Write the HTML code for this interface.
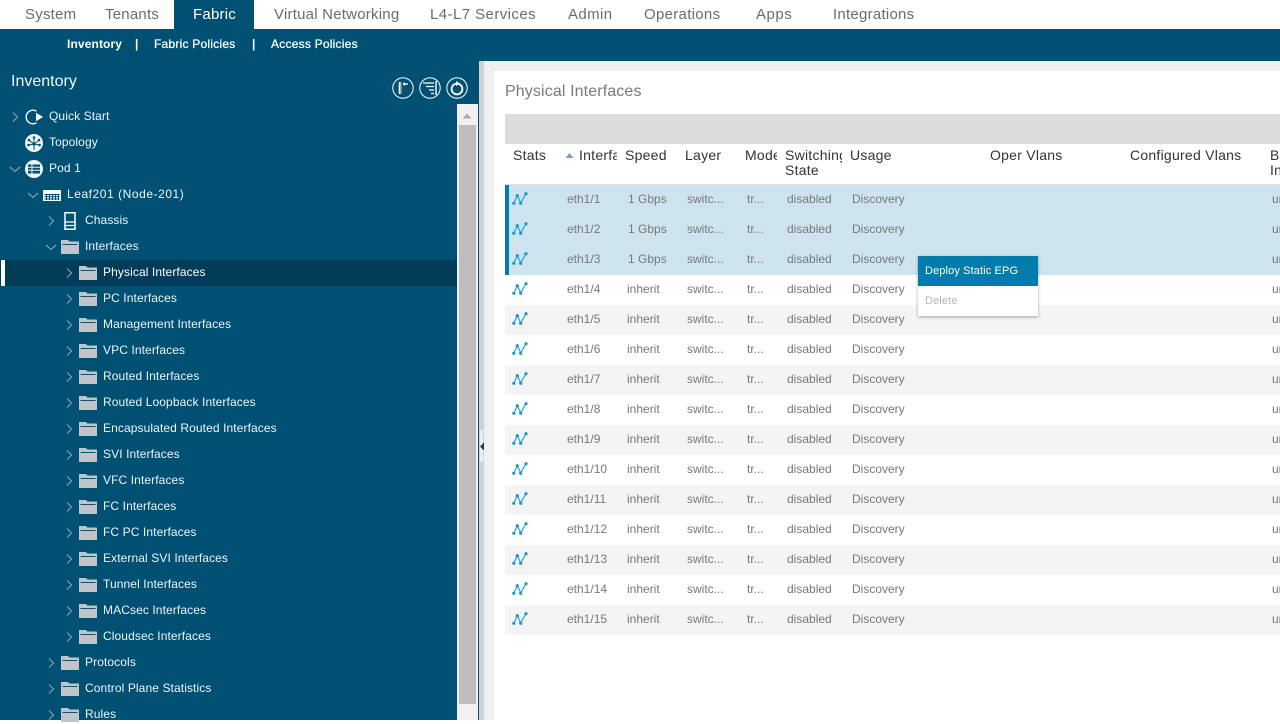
<!DOCTYPE html>
<html><head><meta charset="utf-8"><title>Fabric Inventory</title>
<style>
html,body{margin:0;padding:0}
body{width:1280px;height:720px;overflow:hidden;position:relative;background:#fff;font-family:"Liberation Sans",sans-serif;font-size:12px}
div,span,svg{position:absolute;white-space:nowrap}
.nav{top:6px;font-size:15px;line-height:18px;color:#6b6b6b;letter-spacing:.22px}
.sub{top:37px;font-size:12px;line-height:14px;color:#fff;font-weight:bold;letter-spacing:.12px}
.tx{color:#eef5f8;line-height:14px;letter-spacing:.1px;margin-top:-1px}
.ch{width:12px;height:12px;fill:none;stroke:#7fa0b2;stroke-width:1.2}
.ic{width:18px;height:18px}
.h{top:148px;font-size:14px;line-height:15px;color:#333;overflow:hidden;letter-spacing:.25px}
.row{left:505px;width:775px;height:30px;background:#fff}
.g{background:#f4f4f4}
.s{background:#cde4ef}
.s:before{content:"";position:absolute;left:0;top:0;width:4px;height:30px;background:#017cad}
.row span{top:7px;line-height:14px;color:#787878}
.row svg{left:7px;top:5px;width:16px;height:16px}
</style></head><body>
<svg width="0" height="0" style="left:0;top:0">
<defs>
<symbol id="f" viewBox="0 0 18 18"><path d="M0 2h7l1.500 1.500H18V16H0z" fill="#bfc5cb"/><path d="M1.500 6h15v1.300h-15z" fill="#17506f"/><path d="M1.500 7.300h15V8h-15z" fill="#e6e8ea"/></symbol>
<symbol id="r" viewBox="0 0 12 12"><path d="M4 1.500 8.500 6 4 10.500"/></symbol>
<symbol id="d" viewBox="0 0 12 12"><path d="M1 4 6 8.500 11 4"/></symbol>
<symbol id="c" viewBox="0 0 16 16"><path d="M2 13 5.300 5.500 8.700 13 14 3.500" fill="none" stroke="#189ed8" stroke-width="1.100"/><circle cx="1.800" cy="13.300" r="1.600" fill="#0f9ad6"/><circle cx="5.300" cy="5.700" r="1.600" fill="#0f9ad6"/><circle cx="8.700" cy="13.300" r="1.600" fill="#0f9ad6"/><circle cx="14" cy="3.700" r="1.600" fill="#0f9ad6"/></symbol>
</defs></svg>

<div style="left:0;top:0;width:1280px;height:29px;background:#fff"></div>
<div style="left:174px;top:0;width:80px;height:29px;background:#005073"></div>
<div class="nav" style="left:25px">System</div>
<div class="nav" style="left:105px">Tenants</div>
<div class="nav" style="left:193px;color:#fff">Fabric</div>
<div class="nav" style="left:274px">Virtual Networking</div>
<div class="nav" style="left:430px;letter-spacing:.43px">L4-L7 Services</div>
<div class="nav" style="left:568px;letter-spacing:.4px">Admin</div>
<div class="nav" style="left:644px;letter-spacing:.3px">Operations</div>
<div class="nav" style="left:756px;letter-spacing:.5px">Apps</div>
<div class="nav" style="left:833px;letter-spacing:.25px">Integrations</div>

<div style="left:0;top:29px;width:1280px;height:32px;background:#005073"></div>
<div class="sub" style="left:67px">Inventory</div>
<div class="sub" style="left:135px">|</div>
<div class="sub" style="left:154px;font-weight:normal;letter-spacing:.23px;-webkit-text-stroke:.25px #fff">Fabric Policies</div>
<div class="sub" style="left:252px">|</div>
<div class="sub" style="left:271px;font-weight:normal;letter-spacing:.23px;-webkit-text-stroke:.25px #fff">Access Policies</div>

<div style="left:0;top:61px;width:457px;height:659px;background:#005073"></div>
<div style="left:457px;top:61px;width:21px;height:43px;background:#005073"></div>
<div style="left:457px;top:104px;width:21px;height:616px;background:#f0f0f0"></div>
<div style="left:459px;top:125px;width:17px;height:579px;background:#bdbdbd"></div>
<svg style="left:462px;top:112px;width:10px;height:8px"><path d="M5 1.500 9.500 6.500H.5z" fill="#a9a9a9"/></svg>
<div style="left:478px;top:61px;width:1px;height:659px;background:#005073"></div>
<div style="left:479px;top:61px;width:5px;height:659px;background:#d2d2d2"></div>
<div style="left:484px;top:61px;width:796px;height:659px;background:#f0f0f0"></div>
<div style="left:494px;top:71px;width:786px;height:649px;background:#fff"></div>
<div style="left:480px;top:430px;width:3px;height:32px;background:#ececec"></div>
<svg style="left:479px;top:442px;width:6px;height:9px"><path d="M1 4.500 5 .5v8z" fill="#333"/></svg>

<div style="left:11px;top:72px;font-size:16px;line-height:19px;color:#f2f7f9">Inventory</div>
<svg style="left:392px;top:77px;width:22px;height:22px" viewBox="0 0 22 22" fill="none"><circle cx="11" cy="11" r="10.200" stroke="#e8f0f4" stroke-width="1.100"/><path d="M7.500 5v12" stroke="#fff" stroke-width="1.600"/><path d="M9 5v12" stroke="#e9c98a" stroke-width=".8"/><path d="M11 7h5" stroke="#fff" stroke-width="1.300"/><path d="M13 5l-2.500 2 2.500 2z" fill="#fff"/></svg>
<svg style="left:419px;top:77px;width:22px;height:22px" viewBox="0 0 22 22" fill="none"><circle cx="11" cy="11" r="10.200" stroke="#e8f0f4" stroke-width="1.100"/><path d="M4 6h11M7 9.500h8M10 13h5M12 16.500h3" stroke="#fff" stroke-width="1.300"/><path d="M17 4v14" stroke="#fff" stroke-width="1.400"/></svg>
<svg style="left:446px;top:77px;width:22px;height:22px" viewBox="0 0 22 22" fill="none"><circle cx="11" cy="11" r="10.200" stroke="#e8f0f4" stroke-width="1.100"/><circle cx="11" cy="12" r="5.400" stroke="#fff" stroke-width="1.800"/><path d="M10 4l4 2.500-4 2.500z" fill="#fff"/></svg>

<!-- tree -->
<div style="left:0;top:260px;width:457px;height:26px;background:#023c59"></div>
<div style="left:1px;top:260px;width:4px;height:26px;background:#fff"></div>

<svg class="ch" style="left:9px;top:111px"><use href="#r"/></svg>
<svg style="left:25px;top:108px;width:19px;height:18px" viewBox="0 0 19 18" fill="none"><path d="M11.500 3.200A6.800 6.800 0 1 0 11.500 14.800" stroke="#fff" stroke-width="1.300"/><path d="M11 4.800 18 9l-7 4.200z" fill="#fff"/></svg>
<div class="tx" style="left:49px;top:110px">Quick Start</div>

<svg style="left:25px;top:134px;width:18px;height:18px" viewBox="0 0 18 18"><circle cx="9" cy="9" r="9" fill="#f2f5f7"/><path d="M9 4v12M4 6.500 9 10l5-3.500M3.500 11 9 10l5.500 1" stroke="#005073" stroke-width="1" fill="none"/><circle cx="9" cy="3.500" r="1.300" fill="#005073"/><circle cx="4" cy="6" r="1.300" fill="#005073"/><circle cx="14" cy="6" r="1.300" fill="#005073"/><circle cx="3.500" cy="11" r="1.300" fill="#005073"/><circle cx="14.500" cy="11" r="1.300" fill="#005073"/><circle cx="9" cy="10" r="1.600" fill="#005073"/></svg>
<div class="tx" style="left:49px;top:136px">Topology</div>

<svg class="ch" style="left:9px;top:163px"><use href="#d"/></svg>
<svg style="left:25px;top:160px;width:18px;height:18px" viewBox="0 0 18 18"><circle cx="9" cy="9" r="9" fill="#f2f5f7"/><path d="M3 4.500h12v9H3z" fill="#005073"/><path d="M3 7.200h12M3 10.200h12M7 4.500v9" stroke="#f2f5f7" stroke-width="1"/></svg>
<div class="tx" style="left:49px;top:162px">Pod 1</div>

<svg class="ch" style="left:27px;top:189px"><use href="#d"/></svg>
<svg style="left:43px;top:189px;width:18px;height:13px" viewBox="0 0 18 13"><path d="M0 1h18v11H0z" fill="#fff"/><path d="M1.500 5.500h15M1.500 7.800h15M1.500 10h15" stroke="#005073" stroke-width="1"/><path d="M3.500 5v6M6.500 5v6M9.500 5v6M12.500 5v6M15.500 5v6" stroke="#005073" stroke-width="1"/></svg>
<div class="tx" style="left:67px;top:188px;letter-spacing:.55px">Leaf201 (Node-201)</div>

<svg class="ch" style="left:45px;top:215px"><use href="#r"/></svg>
<svg style="left:64px;top:212px;width:12px;height:18px" viewBox="0 0 12 18" fill="none"><path d="M1 .8h10v16.400H1z" stroke="#fff" stroke-width="1.500"/><path d="M1 10h10M1 13.500h10" stroke="#fff" stroke-width="1.300"/></svg>
<div class="tx" style="left:85px;top:214px">Chassis</div>

<svg class="ch" style="left:45px;top:241px"><use href="#d"/></svg>
<svg class="ic" style="left:61px;top:238px"><use href="#f"/></svg>
<div class="tx" style="left:85px;top:240px">Interfaces</div>

<svg class="ch" style="left:63px;top:267px"><use href="#r"/></svg><svg class="ic" style="left:79px;top:264px"><use href="#f"/></svg><div class="tx" style="left:103px;top:266px;color:#fff">Physical Interfaces</div>
<svg class="ch" style="left:63px;top:293px"><use href="#r"/></svg><svg class="ic" style="left:79px;top:290px"><use href="#f"/></svg><div class="tx" style="left:103px;top:292px">PC Interfaces</div>
<svg class="ch" style="left:63px;top:319px"><use href="#r"/></svg><svg class="ic" style="left:79px;top:316px"><use href="#f"/></svg><div class="tx" style="left:103px;top:318px">Management Interfaces</div>
<svg class="ch" style="left:63px;top:345px"><use href="#r"/></svg><svg class="ic" style="left:79px;top:342px"><use href="#f"/></svg><div class="tx" style="left:103px;top:344px">VPC Interfaces</div>
<svg class="ch" style="left:63px;top:371px"><use href="#r"/></svg><svg class="ic" style="left:79px;top:368px"><use href="#f"/></svg><div class="tx" style="left:103px;top:370px">Routed Interfaces</div>
<svg class="ch" style="left:63px;top:397px"><use href="#r"/></svg><svg class="ic" style="left:79px;top:394px"><use href="#f"/></svg><div class="tx" style="left:103px;top:396px">Routed Loopback Interfaces</div>
<svg class="ch" style="left:63px;top:423px"><use href="#r"/></svg><svg class="ic" style="left:79px;top:420px"><use href="#f"/></svg><div class="tx" style="left:103px;top:422px">Encapsulated Routed Interfaces</div>
<svg class="ch" style="left:63px;top:449px"><use href="#r"/></svg><svg class="ic" style="left:79px;top:446px"><use href="#f"/></svg><div class="tx" style="left:103px;top:448px">SVI Interfaces</div>
<svg class="ch" style="left:63px;top:475px"><use href="#r"/></svg><svg class="ic" style="left:79px;top:472px"><use href="#f"/></svg><div class="tx" style="left:103px;top:474px">VFC Interfaces</div>
<svg class="ch" style="left:63px;top:501px"><use href="#r"/></svg><svg class="ic" style="left:79px;top:498px"><use href="#f"/></svg><div class="tx" style="left:103px;top:500px">FC Interfaces</div>
<svg class="ch" style="left:63px;top:527px"><use href="#r"/></svg><svg class="ic" style="left:79px;top:524px"><use href="#f"/></svg><div class="tx" style="left:103px;top:526px">FC PC Interfaces</div>
<svg class="ch" style="left:63px;top:553px"><use href="#r"/></svg><svg class="ic" style="left:79px;top:550px"><use href="#f"/></svg><div class="tx" style="left:103px;top:552px">External SVI Interfaces</div>
<svg class="ch" style="left:63px;top:579px"><use href="#r"/></svg><svg class="ic" style="left:79px;top:576px"><use href="#f"/></svg><div class="tx" style="left:103px;top:578px">Tunnel Interfaces</div>
<svg class="ch" style="left:63px;top:605px"><use href="#r"/></svg><svg class="ic" style="left:79px;top:602px"><use href="#f"/></svg><div class="tx" style="left:103px;top:604px">MACsec Interfaces</div>
<svg class="ch" style="left:63px;top:631px"><use href="#r"/></svg><svg class="ic" style="left:79px;top:628px"><use href="#f"/></svg><div class="tx" style="left:103px;top:630px">Cloudsec Interfaces</div>
<svg class="ch" style="left:45px;top:657px"><use href="#r"/></svg><svg class="ic" style="left:61px;top:654px"><use href="#f"/></svg><div class="tx" style="left:85px;top:656px">Protocols</div>
<svg class="ch" style="left:45px;top:683px"><use href="#r"/></svg><svg class="ic" style="left:61px;top:680px"><use href="#f"/></svg><div class="tx" style="left:85px;top:682px">Control Plane Statistics</div>
<svg class="ch" style="left:45px;top:709px"><use href="#r"/></svg><svg class="ic" style="left:61px;top:706px"><use href="#f"/></svg><div class="tx" style="left:85px;top:708px">Rules</div>

<!-- content -->
<div style="left:505px;top:82px;font-size:16px;line-height:19px;color:#7a7a7a;letter-spacing:.12px">Physical Interfaces</div>
<div style="left:505px;top:114px;width:775px;height:30px;background:#dcdcdc"></div>
<div class="h" style="left:513px">Stats</div>
<svg style="left:565px;top:153px;width:9px;height:6px"><path d="M4.500 0 8.500 5H.5z" fill="#7f9cc4"/></svg>
<div class="h" style="left:579px;width:38px">Interface</div>
<div class="h" style="left:625px">Speed</div>
<div class="h" style="left:685px">Layer</div>
<div class="h" style="left:745px;width:32px">Mode</div>
<div class="h" style="left:785px;width:57px">Switching<br>State</div>
<div class="h" style="left:850px">Usage</div>
<div class="h" style="left:990px">Oper Vlans</div>
<div class="h" style="left:1130px">Configured Vlans</div>
<div class="h" style="left:1270px;width:10px">BPDU<br>Interface</div>
<div style="left:505px;top:184px;width:775px;height:1px;background:#e2e2e2"></div>

<div class="row s" style="top:185px"><svg><use href="#c"/></svg><span style="left:62px">eth1/1</span><span style="left:123px">1 Gbps</span><span style="left:182px">switc...</span><span style="left:242px">tr...</span><span style="left:282px">disabled</span><span style="left:347px">Discovery</span><span style="left:767px">unknown</span></div>
<div class="row s" style="top:215px"><svg><use href="#c"/></svg><span style="left:62px">eth1/2</span><span style="left:123px">1 Gbps</span><span style="left:182px">switc...</span><span style="left:242px">tr...</span><span style="left:282px">disabled</span><span style="left:347px">Discovery</span><span style="left:767px">unknown</span></div>
<div class="row s" style="top:245px"><svg><use href="#c"/></svg><span style="left:62px">eth1/3</span><span style="left:123px">1 Gbps</span><span style="left:182px">switc...</span><span style="left:242px">tr...</span><span style="left:282px">disabled</span><span style="left:347px">Discovery</span><span style="left:767px">unknown</span></div>
<div class="row" style="top:275px"><svg><use href="#c"/></svg><span style="left:62px">eth1/4</span><span style="left:122px">inherit</span><span style="left:182px">switc...</span><span style="left:242px">tr...</span><span style="left:282px">disabled</span><span style="left:347px">Discovery</span><span style="left:767px">unknown</span></div>
<div class="row g" style="top:305px"><svg><use href="#c"/></svg><span style="left:62px">eth1/5</span><span style="left:122px">inherit</span><span style="left:182px">switc...</span><span style="left:242px">tr...</span><span style="left:282px">disabled</span><span style="left:347px">Discovery</span><span style="left:767px">unknown</span></div>
<div class="row" style="top:335px"><svg><use href="#c"/></svg><span style="left:62px">eth1/6</span><span style="left:122px">inherit</span><span style="left:182px">switc...</span><span style="left:242px">tr...</span><span style="left:282px">disabled</span><span style="left:347px">Discovery</span><span style="left:767px">unknown</span></div>
<div class="row g" style="top:365px"><svg><use href="#c"/></svg><span style="left:62px">eth1/7</span><span style="left:122px">inherit</span><span style="left:182px">switc...</span><span style="left:242px">tr...</span><span style="left:282px">disabled</span><span style="left:347px">Discovery</span><span style="left:767px">unknown</span></div>
<div class="row" style="top:395px"><svg><use href="#c"/></svg><span style="left:62px">eth1/8</span><span style="left:122px">inherit</span><span style="left:182px">switc...</span><span style="left:242px">tr...</span><span style="left:282px">disabled</span><span style="left:347px">Discovery</span><span style="left:767px">unknown</span></div>
<div class="row g" style="top:425px"><svg><use href="#c"/></svg><span style="left:62px">eth1/9</span><span style="left:122px">inherit</span><span style="left:182px">switc...</span><span style="left:242px">tr...</span><span style="left:282px">disabled</span><span style="left:347px">Discovery</span><span style="left:767px">unknown</span></div>
<div class="row" style="top:455px"><svg><use href="#c"/></svg><span style="left:62px">eth1/10</span><span style="left:122px">inherit</span><span style="left:182px">switc...</span><span style="left:242px">tr...</span><span style="left:282px">disabled</span><span style="left:347px">Discovery</span><span style="left:767px">unknown</span></div>
<div class="row g" style="top:485px"><svg><use href="#c"/></svg><span style="left:62px">eth1/11</span><span style="left:122px">inherit</span><span style="left:182px">switc...</span><span style="left:242px">tr...</span><span style="left:282px">disabled</span><span style="left:347px">Discovery</span><span style="left:767px">unknown</span></div>
<div class="row" style="top:515px"><svg><use href="#c"/></svg><span style="left:62px">eth1/12</span><span style="left:122px">inherit</span><span style="left:182px">switc...</span><span style="left:242px">tr...</span><span style="left:282px">disabled</span><span style="left:347px">Discovery</span><span style="left:767px">unknown</span></div>
<div class="row g" style="top:545px"><svg><use href="#c"/></svg><span style="left:62px">eth1/13</span><span style="left:122px">inherit</span><span style="left:182px">switc...</span><span style="left:242px">tr...</span><span style="left:282px">disabled</span><span style="left:347px">Discovery</span><span style="left:767px">unknown</span></div>
<div class="row" style="top:575px"><svg><use href="#c"/></svg><span style="left:62px">eth1/14</span><span style="left:122px">inherit</span><span style="left:182px">switc...</span><span style="left:242px">tr...</span><span style="left:282px">disabled</span><span style="left:347px">Discovery</span><span style="left:767px">unknown</span></div>
<div class="row g" style="top:605px"><svg><use href="#c"/></svg><span style="left:62px">eth1/15</span><span style="left:122px">inherit</span><span style="left:182px">switc...</span><span style="left:242px">tr...</span><span style="left:282px">disabled</span><span style="left:347px">Discovery</span><span style="left:767px">unknown</span></div>

<!-- context menu -->
<div style="left:918px;top:256px;width:120px;height:60px;background:#fff;box-shadow:0 1px 3px rgba(0,0,0,.35)"></div>
<div style="left:918px;top:256px;width:120px;height:30px;background:#017cad"></div>
<div style="left:925px;top:265px;font-size:11px;line-height:13px;color:#fff;letter-spacing:.12px">Deploy Static EPG</div>
<div style="left:925px;top:295px;font-size:11px;line-height:13px;color:#b5b5b5;letter-spacing:.12px">Delete</div>
</body></html>
